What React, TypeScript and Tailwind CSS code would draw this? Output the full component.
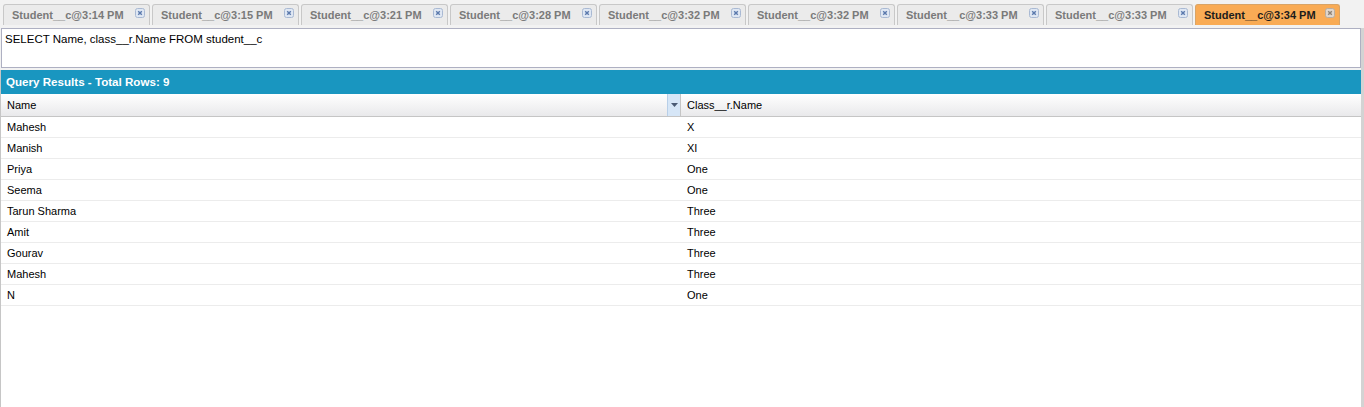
import React from "react";

const tabs = [
  "Student__c@3:14 PM",
  "Student__c@3:15 PM",
  "Student__c@3:21 PM",
  "Student__c@3:28 PM",
  "Student__c@3:32 PM",
  "Student__c@3:32 PM",
  "Student__c@3:33 PM",
  "Student__c@3:33 PM",
];

const rows: [string, string][] = [
  ["Mahesh", "X"],
  ["Manish", "XI"],
  ["Priya", "One"],
  ["Seema", "One"],
  ["Tarun Sharma", "Three"],
  ["Amit", "Three"],
  ["Gourav", "Three"],
  ["Mahesh", "Three"],
  ["N", "One"],
];

function CloseIcon({ active }: { active?: boolean }) {
  return (
    <svg width="10" height="10" viewBox="0 0 10 10" className="shrink-0">
      <rect x="0.5" y="0.5" width="9" height="9" rx="2" fill={active ? "#e0d6cc" : "#dfe7f3"} stroke={active ? "#b9ada0" : "#a9b9d3"} />
      <path d="M3.2 3.2 L6.8 6.8 M6.8 3.2 L3.2 6.8" stroke={active ? "#8c8074" : "#5b79ad"} strokeWidth="1.4" />
    </svg>
  );
}

export default function App() {
  return (
    <div className="h-[407px] w-[1364px] overflow-hidden bg-[#f2f2f2] font-['Liberation_Sans',Arial,sans-serif]">
      <div className="flex h-[25px] items-end gap-[2px] pl-[3px]">
        {tabs.map((t, i) => (
          <div
            key={i}
            className="flex h-[21px] w-[147px] items-start justify-between whitespace-nowrap rounded-t-[3px] border border-b-0 border-[#c8c8c8] bg-[#ebebeb] pl-[8px] pr-[4px] pt-[3px]"
          >
            <span className="text-[11px] font-bold leading-[14px] text-[#7a7a7a]">{t}</span>
            <span className="pt-[0px]"><CloseIcon /></span>
          </div>
        ))}
        <div className="flex h-[21px] w-[145px] items-start justify-between whitespace-nowrap rounded-t-[3px] border border-b-0 border-[#d9a466] bg-[#f9ab55] pl-[8px] pr-[4px] pt-[3px]">
          <span className="text-[11px] font-bold leading-[14px] text-[#1c1c1c]">Student__c@3:34 PM</span>
          <span className="pt-[0px]"><CloseIcon active /></span>
        </div>
      </div>
      <div className="flex h-[382px]">
        <div className="flex w-[1361px] flex-col">
          <div className="mt-[3px] ml-[1px] h-[40px] w-[1360px] border border-[#aeb0c2] bg-white px-[3px] pt-[3px] text-[11.5px] leading-[14px] text-black">
            SELECT Name, class__r.Name FROM student__c
          </div>
          <div className="mt-[2px] flex flex-1 flex-col border-l border-[#c6c6c6] bg-white">
            <div className="flex h-[24px] items-center bg-[#1996c0] pl-[5px] text-[11.6px] font-bold text-white">
              Query Results - Total Rows: 9
            </div>
            <div className="flex h-[23px] border-b border-[#c5c5c5] bg-gradient-to-b from-[#ffffff] to-[#e9e9eb] text-[11px] text-black">
              <div className="flex w-[680px] items-center justify-between border-r border-[#c5c5c5]">
                <span className="pl-[6px]">Name</span>
                <div className="flex h-full w-[13px] items-center justify-center border-l border-[#b8cfe8] bg-[#d6e6f7]">
                  <svg width="7" height="4" viewBox="0 0 7 4"><path d="M0 0 L7 0 L3.5 4 Z" fill="#4a5a74" /></svg>
                </div>
              </div>
              <div className="flex flex-1 items-center pl-[6px]">Class__r.Name</div>
            </div>
            {rows.map(([n, c], i) => (
              <div key={i} className="flex h-[21px] items-center border-b border-[#ececec] text-[11px] text-black">
                <div className="w-[680px] pl-[6px]">{n}</div>
                <div className="pl-[6px]">{c}</div>
              </div>
            ))}
          </div>
        </div>
        <div className="mt-[3px] flex-1 bg-[#d3d3d3]" />
      </div>
    </div>
  );
}
